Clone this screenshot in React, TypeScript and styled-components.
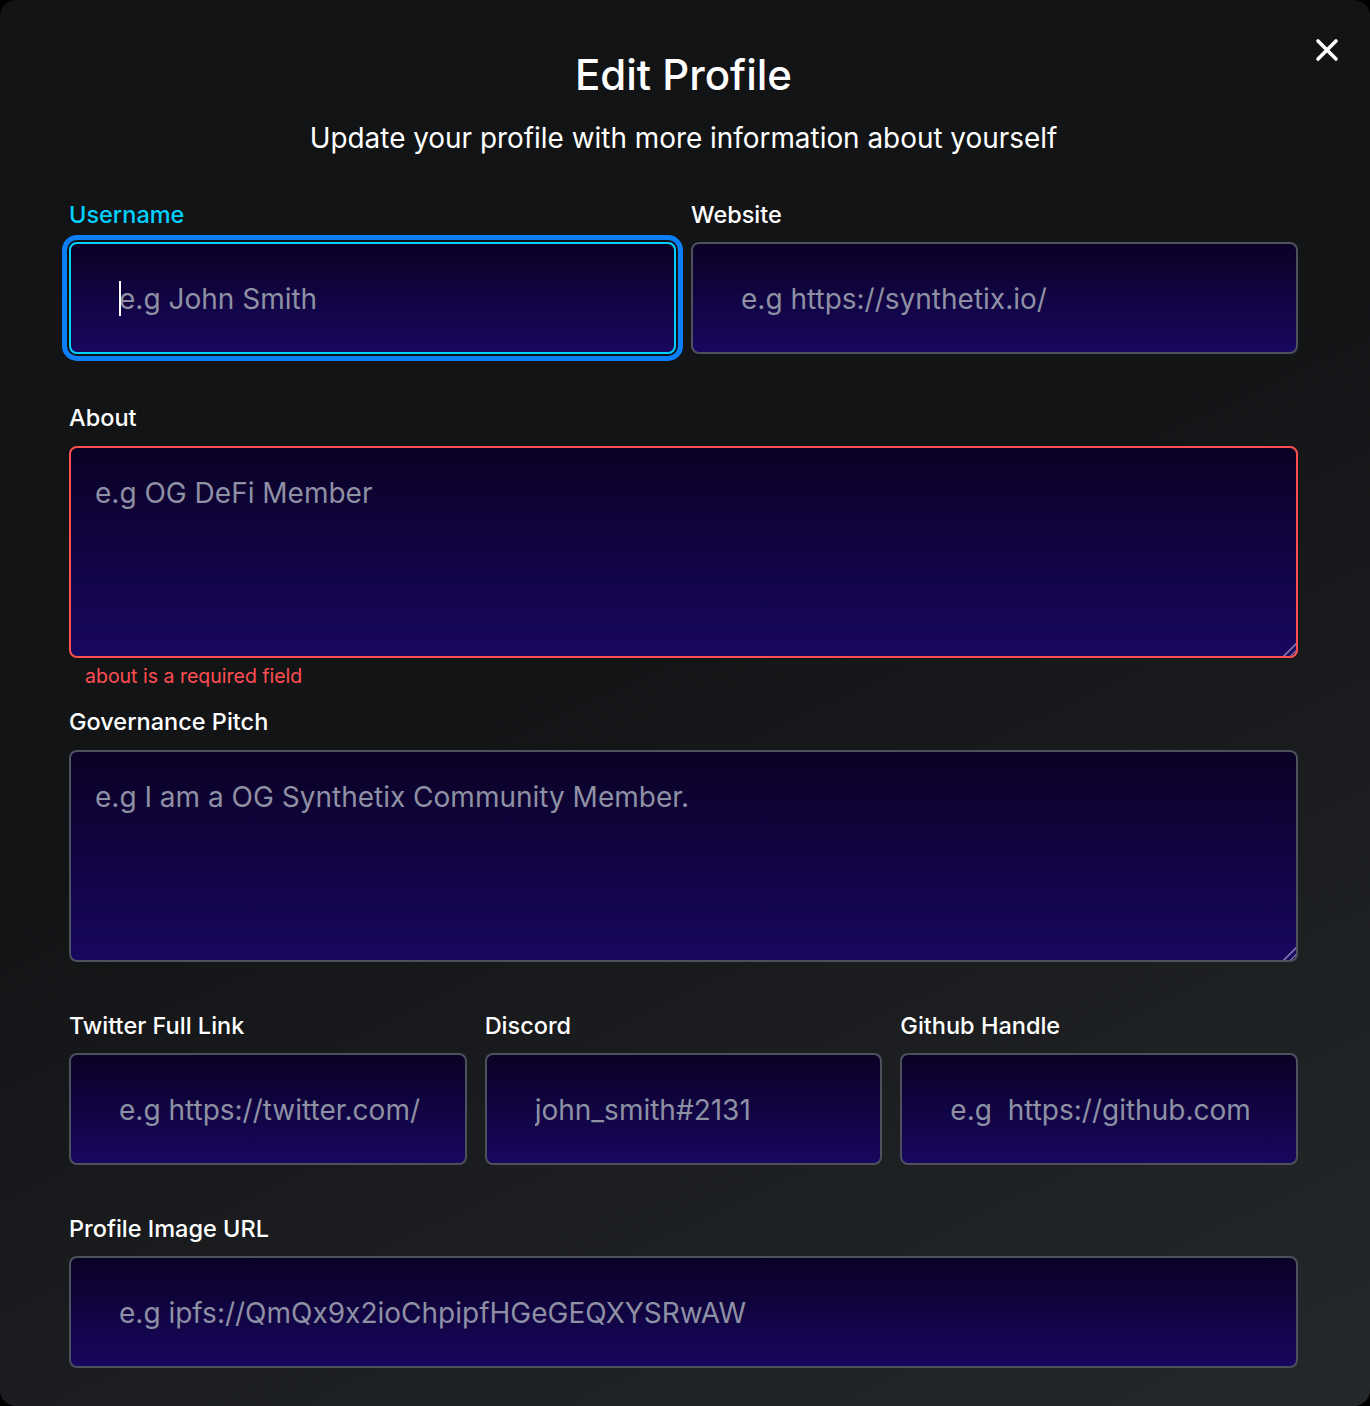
import styled, { createGlobalStyle, css } from 'styled-components';

const GlobalStyle = createGlobalStyle`
  * {
    box-sizing: border-box;
  }

  body {
    margin: 0;
    background: #000;
    font-family: Inter, 'Noto Sans', sans-serif;
    font-feature-settings: 'calt' 0;
  }
`;

const fieldsTop = [
  { id: 'username', label: 'Username', placeholder: 'e.g John Smith', focused: true },
  { id: 'website', label: 'Website', placeholder: 'e.g https://synthetix.io/' },
];

const socials = [
  { id: 'twitter', label: 'Twitter Full Link', placeholder: 'e.g https://twitter.com/' },
  { id: 'discord', label: 'Discord', placeholder: 'john_smith#2131' },
  { id: 'github', label: 'Github Handle', placeholder: 'e.g\u00a0 https://github.com' },
];

function CloseIcon() {
  return (
    <svg width="24" height="24" viewBox="0 0 24 24" fill="none">
      <path
        d="M3 3L21 21M21 3L3 21"
        stroke="#fff"
        strokeWidth="3.6"
        strokeLinecap="round"
      />
    </svg>
  );
}

export default function App() {
  return (
    <>
      <GlobalStyle />
      <Modal>
        <CloseButton aria-label="Close">
          <CloseIcon />
        </CloseButton>
        <Header>
          <Title>Edit Profile</Title>
          <Subtitle>Update your profile with more information about yourself</Subtitle>
        </Header>

        <Form>
          <Row $cols={2}>
            {fieldsTop.map(({ id, label, placeholder, focused }) => (
              <Field key={id}>
                <Label htmlFor={id} $active={focused}>
                  {label}
                </Label>
                <InputWrap>
                  <Input id={id} placeholder={placeholder} $focused={focused} />
                  {focused && <Caret />}
                </InputWrap>
              </Field>
            ))}
          </Row>

          <Field>
            <Label htmlFor="about">About</Label>
            <TextArea id="about" placeholder="e.g OG DeFi Member" $error />
            <ErrorText>about is a required field</ErrorText>
          </Field>

          <Field>
            <Label htmlFor="pitch">Governance Pitch</Label>
            <TextArea id="pitch" placeholder="e.g I am a OG Synthetix Community Member." />
          </Field>

          <Row $cols={3}>
            {socials.map(({ id, label, placeholder }) => (
              <Field key={id}>
                <Label htmlFor={id}>{label}</Label>
                <Input id={id} placeholder={placeholder} />
              </Field>
            ))}
          </Row>

          <Field>
            <Label htmlFor="image">Profile Image URL</Label>
            <Input id="image" placeholder="e.g ipfs://QmQx9x2ioChpipfHGeGEQXYSRwAW" />
          </Field>
        </Form>
      </Modal>
    </>
  );
}

const Modal = styled.div`
  position: relative;
  min-height: 1406px;
  padding: 51px 72px 37px 69px;
  border-radius: 16px;
  background: linear-gradient(155deg, #121315 0%, #131416 45%, #25282b 100%);
  color: #fff;
`;

const CloseButton = styled.button`
  position: absolute;
  top: 38px;
  right: 31px;
  width: 24px;
  height: 24px;
  padding: 0;
  border: none;
  background: transparent;
  cursor: pointer;
  display: flex;
`;

const Header = styled.header`
  display: flex;
  flex-direction: column;
  align-items: center;
  gap: 22px;
  margin-bottom: 45px;
`;

const Title = styled.h1`
  margin: 0;
  font-size: 42px;
  line-height: 48px;
  font-weight: 500;
`;

const Subtitle = styled.p`
  margin: 0;
  font-size: 27.9px;
  line-height: 34px;
  font-weight: 400;
`;

const Form = styled.form`
  display: flex;
  flex-direction: column;
  gap: 49px;
`;

const Row = styled.div<{ $cols: number }>`
  display: grid;
  grid-template-columns: repeat(${({ $cols }) => $cols}, 1fr);
  column-gap: ${({ $cols }) => ($cols === 3 ? 18 : 15)}px;
`;

const Field = styled.div`
  display: flex;
  flex-direction: column;
  min-width: 0;
`;

const Label = styled.label<{ $active?: boolean }>`
  font-size: 23.5px;
  line-height: 30px;
  font-weight: 500;
  margin-bottom: 12px;
  color: ${({ $active }) => ($active ? '#00d1ff' : '#fff')};
`;

const fieldBase = css`
  width: 100%;
  border: 2px solid #4d515d;
  border-radius: 8px;
  background: linear-gradient(180deg, #0a0125 0%, #18075f 100%);
  color: #fff;
  font-family: Inter, 'Noto Sans', sans-serif;
  font-feature-settings: 'calt' 0;
  font-size: 28px;
  outline: none;

  &::placeholder {
    color: #8e90a4;
    opacity: 1;
  }
`;

const InputWrap = styled.div`
  position: relative;
`;

const Input = styled.input<{ $focused?: boolean }>`
  ${fieldBase};
  height: 112px;
  padding: 2px 20px 0 48px;

  ${({ $focused }) =>
    $focused &&
    css`
      border-color: #00cfff;
      box-shadow: 0 0 0 2px #111214, 0 0 0 7px #0a7ff7;
    `}
`;

const Caret = styled.span`
  position: absolute;
  left: 50px;
  top: 39px;
  width: 2px;
  height: 35px;
  background: #fff;
`;

const TextArea = styled.textarea<{ $error?: boolean }>`
  ${fieldBase};
  display: block;
  margin-top: 1px;
  height: 212px;
  padding: 28px 24px 26px;
  line-height: 34px;
  resize: vertical;
  border-color: ${({ $error }) => ($error ? '#ff4f4f' : '#4d515d')};

  &::-webkit-scrollbar {
    width: 24px;
    height: 24px;
    background: transparent;
  }

  &::-webkit-resizer {
    background:
      linear-gradient(135deg, #17075c 50%, transparent 50%),
      repeating-linear-gradient(
        135deg,
        transparent 0,
        transparent 3px,
        #6d5f9e 3px,
        #6d5f9e 4.5px
      );
  }
`;

const ErrorText = styled.span`
  margin: 6px 0 -30px 16px;
  font-size: 19.5px;
  line-height: 24px;
  color: #ff4f52;
`;
